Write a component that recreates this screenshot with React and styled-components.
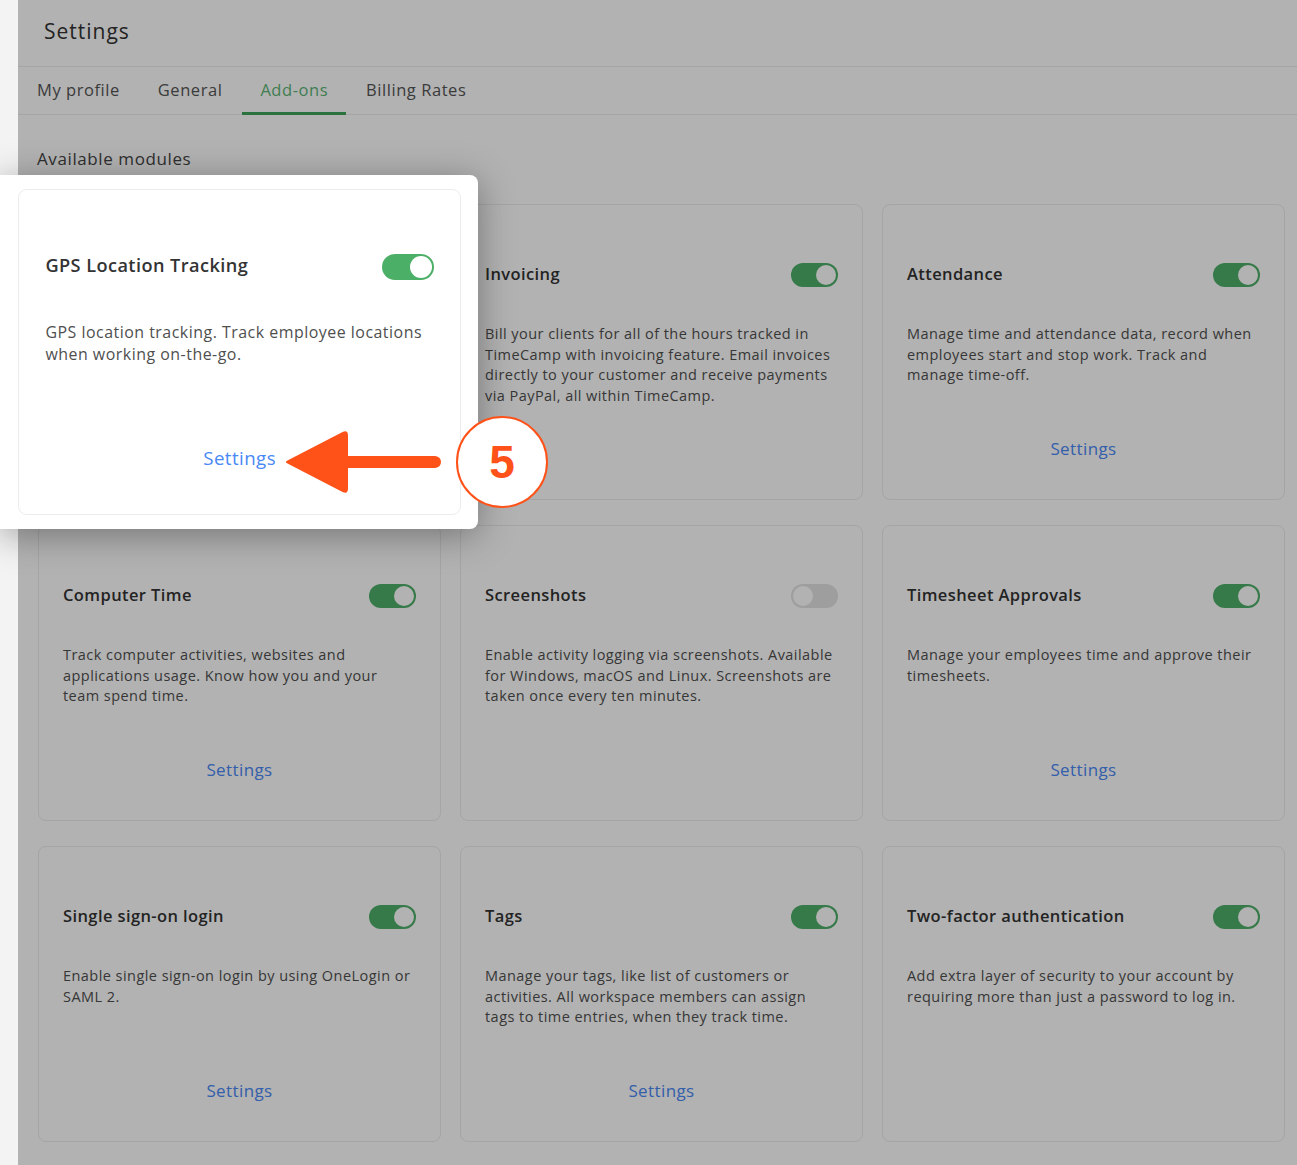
import styled, { createGlobalStyle } from "styled-components";

const GlobalStyle = createGlobalStyle`
  html, body {
    margin: 0;
    padding: 0;
    background: #f2f2f2;
  }
  body {
    font-family: "Open Sans", "Liberation Sans", sans-serif;
    -webkit-font-smoothing: antialiased;
  }
  * {
    box-sizing: border-box;
  }
`;

const modules = [
  {
    title: "GPS Location Tracking",
    text: "GPS location tracking. Track employee locations when working on-the-go.",
    on: true,
    settings: true,
  },
  {
    title: "Invoicing",
    text: "Bill your clients for all of the hours tracked in TimeCamp with invoicing feature. Email invoices directly to your customer and receive payments via PayPal, all within TimeCamp.",
    on: true,
    settings: false,
  },
  {
    title: "Attendance",
    text: "Manage time and attendance data, record when employees start and stop work. Track and manage time-off.",
    on: true,
    settings: true,
  },
  {
    title: "Computer Time",
    text: "Track computer activities, websites and applications usage. Know how you and your team spend time.",
    on: true,
    settings: true,
  },
  {
    title: "Screenshots",
    text: "Enable activity logging via screenshots. Available for Windows, macOS and Linux. Screenshots are taken once every ten minutes.",
    on: false,
    settings: false,
  },
  {
    title: "Timesheet Approvals",
    text: "Manage your employees time and approve their timesheets.",
    on: true,
    settings: true,
  },
  {
    title: "Single sign-on login",
    text: "Enable single sign-on login by using OneLogin or SAML 2.",
    on: true,
    settings: true,
  },
  {
    title: "Tags",
    text: "Manage your tags, like list of customers or activities. All workspace members can assign tags to time entries, when they track time.",
    on: true,
    settings: true,
  },
  {
    title: "Two-factor authentication",
    text: "Add extra layer of security to your account by requiring more than just a password to log in.",
    on: true,
    settings: false,
  },
];

const tabs = ["My profile", "General", "Add-ons", "Billing Rates"];

const ModuleCard = ({ module }) => (
  <Card>
    <CardHead>
      <CardTitle>{module.title}</CardTitle>
      <Toggle $on={module.on} />
    </CardHead>
    <CardText>{module.text}</CardText>
    <CardFoot>{module.settings && <SettingsLink>Settings</SettingsLink>}</CardFoot>
  </Card>
);

const App = () => {
  return (
    <Page>
      <GlobalStyle />
      <Rail />
      <Main>
        <Header>
          <PageTitle>Settings</PageTitle>
        </Header>
        <Tabs>
          {tabs.map((t) => (
            <Tab key={t} $active={t === "Add-ons"}>
              {t}
            </Tab>
          ))}
        </Tabs>
        <Content>
          <SectionTitle>Available modules</SectionTitle>
          <Grid>
            {modules.map((m) => (
              <ModuleCard key={m.title} module={m} />
            ))}
          </Grid>
        </Content>
        <Dim />
      </Main>
      <Spotlight>
        <ModuleCard module={modules[0]} />
      </Spotlight>
      <Arrow width="160" height="70" viewBox="0 0 160 70">
        <path
          d="M5 35 L61 6 Q65 4 65 8 L65 30 L153 30 Q158 31 158 35 Q158 39 153 40 L65 40 L65 62 Q65 66 61 64 Z"
          fill="#fe5219"
          stroke="#fe5219"
          strokeWidth="2"
          strokeLinejoin="round"
        />
      </Arrow>
      <StepBadge>5</StepBadge>
    </Page>
  );
};

const Page = styled.div`
  position: relative;
  display: flex;
  width: 1297px;
  min-height: 1165px;
  overflow: hidden;
`;

const Rail = styled.div`
  width: 18px;
  flex: 0 0 18px;
  background: #f3f3f3;
`;

const Main = styled.main`
  position: relative;
  flex: 1;
  background: #ffffff;
  min-height: 1165px;
`;

const Dim = styled.div`
  position: absolute;
  inset: 0;
  background: rgba(0, 0, 0, 0.3);
`;

const Header = styled.header`
  height: 67px;
  display: flex;
  align-items: center;
  padding: 0 0 4px 26px;
  border-bottom: 1px solid #ececec;
`;

const PageTitle = styled.h1`
  margin: 0;
  font-size: 21px;
  font-weight: 500;
  letter-spacing: 1px;
  color: #333333;
`;

const Tabs = styled.nav`
  display: flex;
  gap: 2px;
  height: 48px;
  padding-left: 1px;
  border-bottom: 1px solid #ececec;
`;

const Tab = styled.div`
  display: flex;
  align-items: center;
  padding: 0 18px;
  font-size: 16.5px;
  letter-spacing: 0.55px;
  color: ${(p) => (p.$active ? "#5cb575" : "#555555")};
  border-bottom: 3px solid ${(p) => (p.$active ? "#3fa45a" : "transparent")};
  margin-bottom: -1px;
`;

const Content = styled.section`
  padding: 32px 12px 23px 20px;
`;

const SectionTitle = styled.h2`
  margin: 0 0 33px -1px;
  font-size: 17px;
  line-height: 24px;
  font-weight: 400;
  letter-spacing: 0.6px;
  color: #444444;
`;

const Grid = styled.div`
  display: grid;
  grid-template-columns: repeat(3, 403px);
  column-gap: 19px;
  row-gap: 25px;
`;

const Card = styled.article`
  width: 403px;
  height: 296px;
  display: flex;
  flex-direction: column;
  padding: 58px 24px 0;
  background: #ffffff;
  border: 1px solid #ececec;
  border-radius: 8px;
`;

const CardHead = styled.div`
  display: flex;
  align-items: center;
  justify-content: space-between;
  height: 24px;
`;

const CardTitle = styled.h3`
  margin: -3px 0 0;
  font-size: 16.5px;
  line-height: 24px;
  font-weight: 600;
  letter-spacing: 0.4px;
  color: #333333;
`;

const Toggle = styled.span`
  position: relative;
  width: 47px;
  height: 24px;
  border-radius: 12px;
  background: ${(p) => (p.$on ? "#4caf67" : "#e2e2e2")};
  &::after {
    content: "";
    position: absolute;
    top: 2px;
    left: ${(p) => (p.$on ? "25px" : "2px")};
    width: 20px;
    height: 20px;
    border-radius: 50%;
    background: #ffffff;
  }
`;

const CardText = styled.p`
  flex: 1;
  margin: 37px 0 0;
  font-size: 14.5px;
  line-height: 20.5px;
  letter-spacing: 0.45px;
  color: #4f4f4f;
`;

const CardFoot = styled.div`
  height: 24px;
  margin-bottom: 38px;
  display: flex;
  justify-content: center;
`;

const SettingsLink = styled.a`
  font-size: 17px;
  line-height: 24px;
  letter-spacing: 0.4px;
  color: #4a88f5;
  cursor: pointer;
`;

const Spotlight = styled.div`
  position: absolute;
  left: 0;
  top: 175px;
  padding: 14px 17px 14px 18px;
  background: #ffffff;
  border-radius: 0 8px 8px 0;
  box-shadow: 0 6px 36px rgba(0, 0, 0, 0.35);
  & > article {
    zoom: 1.1;
  }
`;

const Arrow = styled.svg`
  position: absolute;
  left: 282px;
  top: 427px;
`;

const StepBadge = styled.div`
  position: absolute;
  left: 456px;
  top: 416px;
  width: 92px;
  height: 92px;
  border-radius: 50%;
  border: 2px solid #fe5219;
  background: #ffffff;
  display: flex;
  align-items: center;
  justify-content: center;
  font-family: "Liberation Sans", Arial, sans-serif;
  font-weight: 700;
  font-size: 46px;
  color: #fe5219;
`;

export default App;
